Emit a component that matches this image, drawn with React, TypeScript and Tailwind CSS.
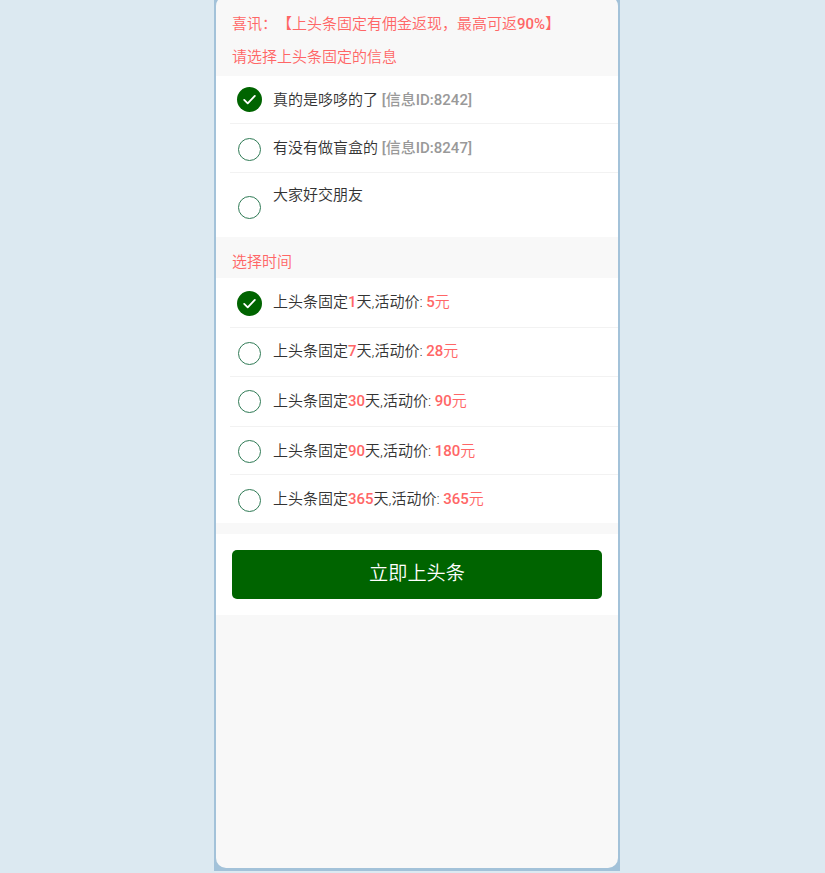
const font = 'font-["Roboto","Noto_Sans_CJK_SC",sans-serif] font-[350] [text-spacing-trim:space-all]';

function Radio({ checked }: { checked?: boolean }) {
  if (checked) {
    return (
      <span className="flex h-[25px] w-[25px] shrink-0 items-center justify-center rounded-full bg-[#006400]">
        <svg viewBox="0 0 24 24" className="h-[17px] w-[17px]" fill="none" stroke="white" strokeWidth="2.6" strokeLinecap="round" strokeLinejoin="round">
          <path d="M4.5 12.5l5 5L19.5 7" />
        </svg>
      </span>
    );
  }
  return <span className="block h-[23px] w-[23px] shrink-0 rounded-full border border-[#2f7a55] bg-white" />;
}

function Row({ checked, h, ring, label, last, children }: { checked?: boolean; h: string; ring: string; label?: string; last?: boolean; children: React.ReactNode }) {
  return (
    <div className={`ml-[14px] flex items-center pl-[6px] ${h} ${last ? '' : 'border-b border-[#f2f2f2]'}`}>
      <span className={`flex w-[27px] shrink-0 justify-center ${ring}`}>
        <Radio checked={checked} />
      </span>
      <div className={`ml-[10px] text-[15px] leading-[22px] text-[#333] ${label ?? ''}`}>{children}</div>
    </div>
  );
}

function TimeText({ days, price }: { days: number; price: number }) {
  return (
    <>
      上头条固定<b className="font-medium text-[#ff6666]">{days}</b>天,活动价: <b className="font-medium text-[#ff6666]">{price}</b>
      <span className="text-[#ff6666]">元</span>
    </>
  );
}

export default function App() {
  return (
    <div className={`h-[873px] overflow-hidden bg-[#dce9f1] ${font}`}>
      <div className="ml-[214px] flow-root h-[871px] w-[406px] bg-[#a3c2d9] px-[2px]">
        <div className="-mt-[4px] flex h-[872px] flex-col overflow-hidden rounded-[10px] bg-[#f8f8f8]">
          <div className="px-[16px] pt-[17px] text-[15px] leading-[22px] text-[#ff6666]">
            喜讯：【上头条固定有佣金返现，最高可返<span className="font-medium">90%</span>】
          </div>
          <div className="px-[16px] pt-[11px] pb-[8px] text-[15px] leading-[22px] text-[#ff6666]">请选择上头条固定的信息</div>

          <div className="bg-white">
            <Row checked h="h-[48px]" ring="pt-0">
              真的是哆哆的了<b className="font-medium text-[#999]"> [信息ID:8242]</b>
            </Row>
            <Row h="h-[49px]" ring="pt-[2px]">
              有没有做盲盒的<b className="font-medium text-[#999]"> [信息ID:8247]</b>
            </Row>
            <Row h="h-[64px]" ring="pt-[4px]" label="mb-[20px]" last>
              大家好交朋友
            </Row>
          </div>

          <div className="px-[16px] pt-[14px] pb-[5px] text-[15px] leading-[22px] text-[#ff6666]">选择时间</div>

          <div className="bg-white">
            <Row checked h="h-[50px]" ring="pt-[1px]" label="mb-[2px]">
              <TimeText days={1} price={5} />
            </Row>
            <Row h="h-[49px]" ring="pt-[2px]" label="mb-[2px]">
              <TimeText days={7} price={28} />
            </Row>
            <Row h="h-[50px]" ring="pt-0" label="mb-[2px]">
              <TimeText days={30} price={90} />
            </Row>
            <Row h="h-[48px]" ring="pt-[1px]">
              <TimeText days={90} price={180} />
            </Row>
            <Row h="h-[48px]" ring="pt-[2px]" last>
              <TimeText days={365} price={365} />
            </Row>
          </div>

          <div className="mt-[11px] bg-white px-[16px] py-[16px]">
            <button className="block h-[49px] w-[370px] rounded-[5px] bg-[#006400] text-[19.2px] text-white">立即上头条</button>
          </div>
        </div>
      </div>
    </div>
  );
}
